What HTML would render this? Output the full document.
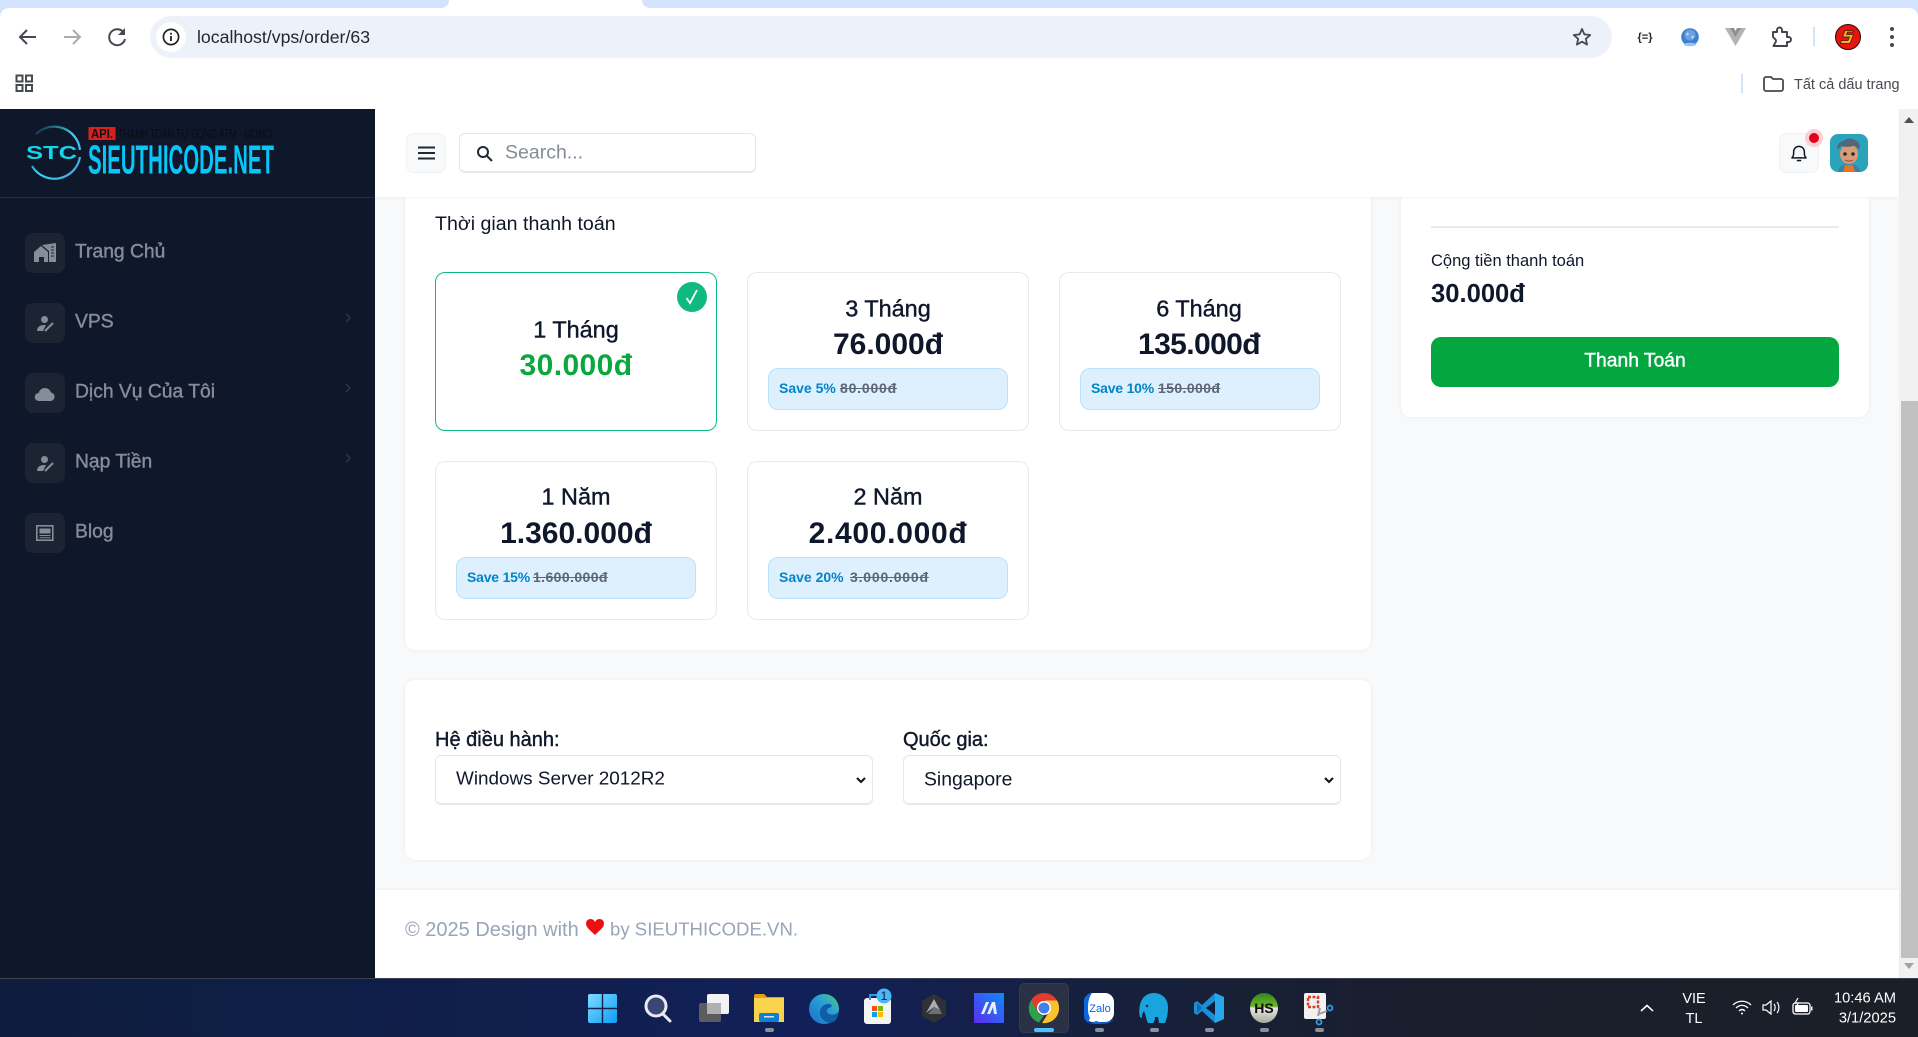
<!DOCTYPE html>
<html lang="vi"><head><meta charset="utf-8"><title>VPS Order</title>
<style>
*{box-sizing:border-box}
html,body{margin:0;padding:0}
body{width:1918px;height:1037px;overflow:hidden;background:#fff;position:relative;font-family:"Liberation Sans","Noto Sans CJK SC",sans-serif;color:#0f172a}
.a{position:absolute}
.t{position:absolute;white-space:nowrap;line-height:1;transform:translateY(-50%)}
.c{position:absolute;white-space:nowrap;line-height:1;transform:translate(-50%,-50%)}
.r{position:absolute;white-space:nowrap;line-height:1;transform:translateY(-50%);text-align:right}
svg{position:absolute;overflow:visible}
.card{position:absolute;background:#fff;border-radius:10px;box-shadow:0 0 3px rgba(15,23,42,.07)}
.plan{position:absolute;width:282px;height:159px;background:#fff;border:1px solid #e7e9ed;border-radius:10px}
.badge{position:absolute;width:240px;height:42px;background:#deF0fe;border:1px solid #bae2fb;border-radius:10px}
.name{font-size:23.4px;-webkit-text-stroke:.4px #0f172a}
.price{font-size:30px;font-weight:700}
.sv{font-size:14px;font-weight:700;color:#0284c7}
.old{font-size:14px;font-weight:700;color:#5b6575;text-decoration:line-through;letter-spacing:.8px}
.ic{position:absolute;left:25px;width:40px;height:40px;background:#1c2434;border-radius:8px}
.nav{font-size:19.3px;color:#868c99;left:75px;-webkit-text-stroke:.4px #868c99}
.sel{position:absolute;width:438px;height:50px;background:#fff;border:1px solid #e5e7eb;border-bottom:2px solid #e5e7eb;border-radius:6px}
.dot{position:absolute;top:1028px;width:9px;height:4px;background:#8b909b;border-radius:2px}
</style></head><body>

<!-- Browser chrome -->
<div class="a" style="left:0;top:0;width:449px;height:8px;background:#d3e3fd;border-radius:0 0 8px 0"></div>
<div class="a" style="left:642px;top:0;width:1276px;height:8px;background:#d3e3fd;border-radius:0 0 0 8px"></div>
<div class="a" style="left:0;top:8px;width:1918px;height:101px;background:#fff"></div>
<div class="a" style="left:0;top:8px;width:8px;height:8px;background:radial-gradient(circle at 100% 100%,#fff 7.5px,#d3e3fd 8px)"></div>
<div class="a" style="left:1910px;top:8px;width:8px;height:8px;background:radial-gradient(circle at 0 100%,#fff 7.5px,#d3e3fd 8px)"></div>
<svg style="left:0;top:0" width="200" height="60" viewBox="0 0 200 60" fill="none">
<path d="M36 37H20M27 30l-7 7 7 7" stroke="#454a50" stroke-width="2"/>
<path d="M64 37h16M73 30l7 7-7 7" stroke="#a9acb0" stroke-width="2"/>
<path d="M124 33a8 8 0 1 0 1 6" stroke="#454a50" stroke-width="2"/><path d="M125 28v7h-7z" fill="#454a50"/>
</svg>
<div class="a" style="left:150px;top:16px;width:1462px;height:42px;background:#edf2fa;border-radius:21px"></div>
<div class="a" style="left:156px;top:22px;width:30px;height:30px;background:#fff;border-radius:50%"></div>
<svg style="left:162px;top:28px" width="18" height="18" viewBox="0 0 18 18" fill="none"><circle cx="9" cy="9" r="7.6" stroke="#1f2226" stroke-width="1.7"/><rect x="8.1" y="8" width="1.8" height="5" fill="#1f2226"/><rect x="8.1" y="4.8" width="1.8" height="1.8" fill="#1f2226"/></svg>
<div class="t" style="left:197px;top:38px;font-size:17.7px;color:#24272b">localhost/vps/order/63</div>
<svg style="left:1572px;top:27px" width="20" height="20" viewBox="0 0 20 20" fill="none"><path d="M10 2l2.4 5.4 5.8.6-4.4 3.9 1.3 5.7L10 14.7l-5.1 2.9 1.3-5.7L1.800 8l5.800-.6z" stroke="#454a50" stroke-width="1.8" stroke-linejoin="round"/></svg>
<div class="c" style="left:1645px;top:38px;font-size:11px;font-weight:700;color:#22252a">{=}</div>
<svg style="left:1681px;top:27px" width="18" height="20" viewBox="0 0 18 20"><circle cx="9" cy="10" r="8.800" fill="#3f7fd0"/><circle cx="9" cy="8" r="5.500" fill="#6aa2e0"/><circle cx="6.500" cy="7" r="1.300" fill="#bcd8f5"/><circle cx="11.500" cy="10" r="1.300" fill="#bcd8f5"/><ellipse cx="9" cy="17.500" rx="6" ry="1.800" fill="#9ec3ec"/></svg>
<svg style="left:1725px;top:28px" width="21" height="18" viewBox="0 0 21 18"><path d="M0 0h7l3.500 6L14 0h7L10.500 18z" fill="#b3b3b3"/><path d="M5 0h4l1.500 3L12 0h4l-5.500 9z" fill="#8f8f8f"/></svg>
<svg style="left:1771px;top:26px" width="21" height="22" viewBox="0 0 21 22" fill="none"><path d="M2 6h4V4a2.500 2.500 0 0 1 5 0v2h5v5h1.500a2.500 2.500 0 0 1 0 5H16v4H2.500l1.500-3a2.500 2.500 0 0 0 0-4l-2-2z" stroke="#3f4347" stroke-width="1.900" stroke-linejoin="round"/></svg>
<div class="a" style="left:1813px;top:27px;width:2px;height:19px;background:#d3e3fd"></div>
<svg style="left:1835px;top:24px" width="26" height="26" viewBox="0 0 26 26"><circle cx="13" cy="13" r="12.500" fill="#e8140f" stroke="#2a0a08" stroke-width="1"/><path d="M18.500 6.500H10L7.500 13h7l-1.500 3.500H6.500l-1 3H15l3.500-9h-7l1-2.500h5.500z" fill="#f6b221" stroke="#3a1a05" stroke-width=".7"/></svg>
<svg style="left:1888px;top:26px" width="8" height="22" viewBox="0 0 8 22"><circle cx="4" cy="3" r="2" fill="#454a50"/><circle cx="4" cy="11" r="2" fill="#454a50"/><circle cx="4" cy="19" r="2" fill="#454a50"/></svg>

<svg style="left:15px;top:74px" width="19" height="19" viewBox="0 0 19 19" fill="none" stroke="#454a50" stroke-width="2"><rect x="1.500" y="1.500" width="6" height="6"/><rect x="11" y="1.500" width="6" height="6"/><rect x="1.500" y="11" width="6" height="6"/><rect x="11" y="11" width="6" height="6"/></svg>
<div class="a" style="left:1741px;top:74px;width:2px;height:19px;background:#d3e3fd"></div>
<svg style="left:1763px;top:76px" width="21" height="16" viewBox="0 0 21 16" fill="none"><path d="M1 3a2 2 0 0 1 2-2h5l2 2h8a2 2 0 0 1 2 2v8a2 2 0 0 1-2 2H3a2 2 0 0 1-2-2z" stroke="#454a50" stroke-width="1.800"/></svg>
<div class="t" style="left:1794px;top:85px;font-size:14.500px;color:#454a50">Tất cả dấu trang</div>

<!-- Main background -->
<div class="a" style="left:375px;top:109px;width:1524px;height:869px;background:#f8f9fb"></div>

<!-- Scrollbar -->
<div class="a" style="left:1899px;top:109px;width:19px;height:869px;background:#f1f1f1"></div>
<div class="a" style="left:1901px;top:401px;width:17px;height:557px;background:#c1c1c1"></div>
<svg style="left:1904px;top:117px" width="10" height="6"><path d="M0 6L5 0l5 6z" fill="#505050"/></svg>
<svg style="left:1904px;top:963px" width="10" height="6"><path d="M0 0l5 6 5-6z" fill="#a3a3a3"/></svg>

<!-- Sidebar -->
<div class="a" style="left:0;top:109px;width:375px;height:869px;background:#0f172a"></div>
<div class="a" style="left:0;top:197px;width:375px;height:1px;background:#262f40"></div>
<svg style="left:26px;top:124px" width="252" height="58" viewBox="0 0 252 58">
<defs><linearGradient id="rg" x1="0" y1="0" x2="1" y2="1"><stop offset="0" stop-color="#0f172a"/><stop offset=".5" stop-color="#35d8f0"/><stop offset="1" stop-color="#4a9fe0"/></linearGradient></defs>
<path d="M10 10A26 26 0 0 1 54 26M54 33A26 26 0 0 1 6 42" fill="none" stroke="url(#rg)" stroke-width="2.200"/>
<text x="0" y="35" font-family="Liberation Sans" font-weight="700" font-size="18" fill="#10d6ee" textLength="51" lengthAdjust="spacingAndGlyphs">STC</text>
<rect x="62.500" y="3" width="27" height="13" fill="#d8201e"/>
<text x="65" y="14" font-family="Liberation Sans" font-weight="700" font-size="12.500" fill="#111" textLength="22" lengthAdjust="spacingAndGlyphs">API.</text>
<text x="92" y="14" font-family="Liberation Sans" font-size="13" fill="#0a0c12" textLength="154" lengthAdjust="spacingAndGlyphs">THANH TOÁN TỰ ĐỘNG ATM - MOMO</text>
<text x="62" y="49.500" font-family="Liberation Sans" font-weight="700" font-size="41" fill="#06c6fa" textLength="186" lengthAdjust="spacingAndGlyphs">SIEUTHICODE.NET</text>
</svg>

<div class="ic" style="top:233px"></div>
<svg style="left:34px;top:243px" width="22" height="20" viewBox="0 0 22 20"><path d="M0 9l7-6 7 6v10h-4v-5H5v5H0z" fill="#868c99"/><path d="M8 2l14-2v19h-7V8L9 3z" fill="#868c99"/><path d="M17 4h3M17 7h3M17 10h3M17 13h3" stroke="#1c2434" stroke-width="1"/></svg>
<div class="t nav" style="top:252px">Trang Chủ</div>

<div class="ic" style="top:303px"></div>
<svg style="left:37px;top:316px" width="17" height="15" viewBox="0 0 17 15"><circle cx="7.500" cy="3.500" r="3.500" fill="#868c99"/><path d="M0 15c0-4 3-6 7-6h2l-3 6z" fill="#868c99"/><path d="M8 15l8-8" stroke="#868c99" stroke-width="2"/></svg>
<div class="t nav" style="top:322px">VPS</div>
<svg style="left:345px;top:313px" width="7" height="10" viewBox="0 0 7 10" fill="none"><path d="M1 1l4 4-4 4" stroke="#2d3547" stroke-width="1.500"/></svg>

<div class="ic" style="top:373px"></div>
<svg style="left:35px;top:386px" width="20" height="15" viewBox="0 0 20 15"><path d="M4 15a4 4 0 0 1-.5-8A6.500 6.500 0 0 1 16 6.500 4.300 4.300 0 0 1 16 15z" fill="#868c99"/></svg>
<div class="t nav" style="top:392px">Dịch Vụ Của Tôi</div>
<svg style="left:345px;top:383px" width="7" height="10" viewBox="0 0 7 10" fill="none"><path d="M1 1l4 4-4 4" stroke="#2d3547" stroke-width="1.500"/></svg>

<div class="ic" style="top:443px"></div>
<svg style="left:37px;top:456px" width="17" height="15" viewBox="0 0 17 15"><circle cx="7.500" cy="3.500" r="3.500" fill="#868c99"/><path d="M0 15c0-4 3-6 7-6h2l-3 6z" fill="#868c99"/><path d="M8 15l8-8" stroke="#868c99" stroke-width="2"/></svg>
<div class="t nav" style="top:462px">Nạp Tiền</div>
<svg style="left:345px;top:453px" width="7" height="10" viewBox="0 0 7 10" fill="none"><path d="M1 1l4 4-4 4" stroke="#2d3547" stroke-width="1.500"/></svg>

<div class="ic" style="top:513px"></div>
<svg style="left:36px;top:525px" width="18" height="16" viewBox="0 0 18 16"><rect x=".8" y=".8" width="16" height="14.400" fill="none" stroke="#868c99" stroke-width="1.600"/><rect x="3.500" y="3.500" width="11" height="5" fill="#868c99"/><path d="M3.500 10.500h11M3.500 12.800h11" stroke="#868c99" stroke-width="1"/></svg>
<div class="t nav" style="top:532px">Blog</div>

<!-- Right summary card -->
<div class="card" style="left:1401px;top:170px;width:468px;height:247px"></div>
<div class="a" style="left:1431px;top:226px;width:408px;height:2px;background:#e9eaec"></div>
<div class="t" style="left:1431px;top:261px;font-size:16.500px">Cộng tiền thanh toán</div>
<div class="t" style="left:1431px;top:295px;font-size:25.600px;font-weight:700">30.000đ</div>
<div class="a" style="left:1431px;top:337px;width:408px;height:50px;background:#03a63f;border-radius:10px"></div>
<div class="c" style="left:1635px;top:361px;font-size:19.300px;color:#fff;-webkit-text-stroke:.4px #fff">Thanh Toán</div>

<!-- Plans card -->
<div class="card" style="left:405px;top:170px;width:966px;height:480px"></div>
<div class="t" style="left:435px;top:225px;font-size:19.600px">Thời gian thanh toán</div>

<div class="plan" style="left:435px;top:272px;border-color:#10b981"></div>
<div class="a" style="left:677px;top:282px;width:30px;height:30px;border-radius:50%;background:#10b981"></div>
<svg style="left:684px;top:288px" width="16" height="18" viewBox="0 0 16 18" fill="none"><path d="M2.500 10l3.500 5L13 2" stroke="#fff" stroke-width="1.800"/></svg>
<div class="c name" style="left:576px;top:330px">1 Tháng</div>
<div class="c price" style="left:576px;top:366px;color:#09a83f;letter-spacing:.4px">30.000đ</div>

<div class="plan" style="left:747px;top:272px"></div>
<div class="c name" style="left:888px;top:309px">3 Tháng</div>
<div class="c price" style="left:888px;top:345px">76.000đ</div>
<div class="badge" style="left:768px;top:368px"></div>
<div class="t sv" style="left:779px;top:388px">Save 5%</div>
<div class="t old" style="left:840px;top:388px">80.000đ</div>

<div class="plan" style="left:1059px;top:272px"></div>
<div class="c name" style="left:1199px;top:309px">6 Tháng</div>
<div class="c price" style="left:1199px;top:345px;letter-spacing:-.6px">135.000đ</div>
<div class="badge" style="left:1080px;top:368px"></div>
<div class="t sv" style="left:1091px;top:388px;letter-spacing:-.2px">Save 10%</div>
<div class="t old" style="left:1158px;top:388px;letter-spacing:.4px">150.000đ</div>

<div class="plan" style="left:435px;top:461px"></div>
<div class="c name" style="left:576px;top:497px">1 Năm</div>
<div class="c price" style="left:576px;top:534px">1.360.000đ</div>
<div class="badge" style="left:456px;top:557px"></div>
<div class="t sv" style="left:467px;top:577px;letter-spacing:-.2px">Save 15%</div>
<div class="t old" style="left:533px;top:577px;letter-spacing:.4px">1.600.000đ</div>

<div class="plan" style="left:747px;top:461px"></div>
<div class="c name" style="left:888px;top:497px">2 Năm</div>
<div class="c price" style="left:888px;top:534px;letter-spacing:.7px">2.400.000đ</div>
<div class="badge" style="left:768px;top:557px"></div>
<div class="t sv" style="left:779px;top:577px">Save 20%</div>
<div class="t old" style="left:850px;top:577px">3.000.000đ</div>

<!-- Options card -->
<div class="card" style="left:405px;top:680px;width:966px;height:180px"></div>
<div class="t" style="left:435px;top:740px;font-size:20px;-webkit-text-stroke:.4px #0f172a">Hệ điều hành:</div>
<div class="t" style="left:903px;top:740px;font-size:20px;-webkit-text-stroke:.4px #0f172a">Quốc gia:</div>
<div class="sel" style="left:435px;top:755px"></div>
<div class="sel" style="left:903px;top:755px"></div>
<div class="t" style="left:456px;top:780px;font-size:18.900px">Windows Server 2012R2</div>
<div class="t" style="left:924px;top:780px;font-size:19.400px">Singapore</div>
<svg style="left:856px;top:777px" width="10" height="7" fill="none"><path d="M1 1l4 4 4-4" stroke="#111" stroke-width="2"/></svg>
<svg style="left:1324px;top:777px" width="10" height="7" fill="none"><path d="M1 1l4 4 4-4" stroke="#111" stroke-width="2"/></svg>

<!-- Header -->
<div class="a" style="left:375px;top:109px;width:1524px;height:88px;background:#fff;box-shadow:0 1px 3px rgba(15,23,42,.05)"></div>
<div class="a" style="left:406px;top:133px;width:40px;height:40px;background:#f8f9fb;border:1px solid #f0f1f4;border-radius:8px"></div>
<svg style="left:418px;top:146px" width="17" height="14"><path d="M0 1.500h17M0 7h17M0 12.500h17" stroke="#1f2937" stroke-width="2"/></svg>
<div class="a" style="left:459px;top:133px;width:297px;height:40px;background:#fff;border:1px solid #e5e7eb;border-bottom-width:2px;border-radius:6px"></div>
<svg style="left:476px;top:145px" width="17" height="17" fill="none"><circle cx="7" cy="7" r="5" stroke="#1f2937" stroke-width="2"/><path d="M10.500 10.500L16 16" stroke="#1f2937" stroke-width="2"/></svg>
<div class="t" style="left:505px;top:153px;font-size:19.500px;color:#848b98">Search...</div>
<div class="a" style="left:1779px;top:133px;width:40px;height:40px;background:#f8f9fb;border:1px solid #f0f1f4;border-radius:8px"></div>
<svg style="left:1791px;top:144px" width="16" height="18" viewBox="0 0 18 20" fill="none"><path d="M1 15.500c2-2 2-4 2-7a6 6 0 0 1 12 0c0 3 0 5 2 7z" stroke="#0f172a" stroke-width="1.700" stroke-linejoin="round"/><path d="M6.500 18.500h5" stroke="#0f172a" stroke-width="1.700"/></svg>
<div class="a" style="left:1805px;top:129px;width:18px;height:18px;border-radius:50%;background:#fbd0d4"></div>
<div class="a" style="left:1809px;top:133px;width:10px;height:10px;border-radius:50%;background:#e5001a"></div>
<svg style="left:1830px;top:134px" width="38" height="38" viewBox="0 0 38 38"><defs><clipPath id="av"><rect width="38" height="38" rx="8"/></clipPath></defs><g clip-path="url(#av)"><rect width="38" height="38" fill="#2ba3b8"/><path d="M8 38c1-6 5-8 11-8s10 2 11 8z" fill="#3d7fa6"/><path d="M13 38l2-7h8l2 7z" fill="#e8742a"/><ellipse cx="19" cy="20" rx="9" ry="10" fill="#d99a78"/><path d="M8 16c-2-6 3-9 6-9 2-3 8-3 10-1 4 0 7 4 5 10-2-3-4-4-6-4-4 1-9 1-11 0-2 0-3 2-4 4z" fill="#55657a"/><circle cx="15" cy="20" r="1.800" fill="#2a2a2a"/><circle cx="23" cy="20" r="1.800" fill="#2a2a2a"/><path d="M15 26c2 1.500 6 1.500 8 0" stroke="#8a4a35" stroke-width="1" fill="none"/></g></svg>

<!-- Footer -->
<div class="a" style="left:375px;top:890px;width:1524px;height:88px;background:#fff;box-shadow:0 -1px 2px rgba(15,23,42,.04)"></div>
<div class="t" style="left:405px;top:930px;font-size:20px;color:#98a4b8">© 2025 Design with</div>
<svg style="left:586px;top:919px" width="18" height="16" viewBox="0 0 18 16"><path d="M9 16C4 11 0 8.500 0 4.500 0 1.500 2.500 0 4.500 0 6.500 0 8 1 9 3c1-2 2.500-3 4.500-3C15.500 0 18 1.500 18 4.500c0 4-4 6.500-9 11.500z" fill="#ec0f0f"/></svg>
<div class="t" style="left:610px;top:930px;font-size:18.600px;color:#98a4b8">by SIEUTHICODE.VN.</div>

<!-- Taskbar -->
<div class="a" style="left:0;top:978px;width:1918px;height:59px;background:linear-gradient(90deg,#0e1d3d 0,#101f4e 30%,#12205a 42%,#15203f 56%,#1a1f2f 72%,#1b1f27 100%)"></div>
<div class="a" style="left:0;top:978px;width:1918px;height:1px;background:#3a4050"></div>
<div class="a" style="left:1019px;top:983px;width:50px;height:50px;background:#2a3145;border:1px solid #343b4f;border-radius:5px"></div>

<svg style="left:588px;top:994px" width="29" height="29" viewBox="0 0 29 29"><defs><linearGradient id="w" x1="0" y1="0" x2="1" y2="1"><stop offset="0" stop-color="#7fdcff"/><stop offset="1" stop-color="#0e9cf5"/></linearGradient></defs><path d="M0 2a2 2 0 0 1 2-2h11.800v13.800H0zM15.200 0H27a2 2 0 0 1 2 2v11.800H15.200zM0 15.200h13.800V29H2a2 2 0 0 1-2-2zM15.200 15.200H29V27a2 2 0 0 1-2 2H15.200z" fill="url(#w)"/></svg>
<svg style="left:644px;top:994px" width="28" height="29" viewBox="0 0 28 29" fill="none"><circle cx="12" cy="12" r="10" fill="#3a4676" stroke="#e8eaf0" stroke-width="3"/><path d="M19 20l7 7" stroke="#e8eaf0" stroke-width="3" stroke-linecap="round"/></svg>
<svg style="left:699px;top:994px" width="30" height="28" viewBox="0 0 30 28"><rect y="9" width="22" height="19" rx="2" fill="#5c5c5f"/><rect x="8" y="0" width="22" height="20" rx="2" fill="#f2f2f2"/><rect x="8" y="9" width="14" height="11" fill="#b0b0b2"/></svg>
<svg style="left:754px;top:994px" width="30" height="28" viewBox="0 0 30 28"><path d="M0 2a2 2 0 0 1 2-2h8l3 3h17v6H0z" fill="#e2a00f"/><path d="M0 4h30v24H0z" fill="#fbd24c"/><rect x="5" y="19" width="20" height="9" rx="2" fill="#0f7fd0"/><rect x="10" y="22" width="10" height="1.500" fill="#cfe9fb"/></svg>
<svg style="left:809px;top:994px" width="30" height="30" viewBox="0 0 30 30"><defs><linearGradient id="e1" x1="0" y1="1" x2="1" y2="0"><stop offset="0" stop-color="#1b6fc4"/><stop offset=".6" stop-color="#2aa0d8"/><stop offset="1" stop-color="#4fd06a"/></linearGradient></defs><circle cx="15" cy="15" r="15" fill="url(#e1)"/><path d="M30 17c-2 4-8 4-10 3-3-1-3-5 0-6 3-1 4-3 1-4-6-1-11 4-10 10 1 6 7 10 13 8 3-1 5-4 6-11z" fill="#0f5ea8"/></svg>
<svg style="left:864px;top:989px" width="32" height="35" viewBox="0 0 32 35"><rect x="0" y="9" width="27" height="26" rx="3" fill="#f4f4f4"/><path d="M6 11V6h14v5" fill="none" stroke="#2a9fe0" stroke-width="2"/><rect x="8" y="17" width="5" height="5" fill="#f25022"/><rect x="14" y="17" width="5" height="5" fill="#7fba00"/><rect x="8" y="23" width="5" height="5" fill="#00a4ef"/><rect x="14" y="23" width="5" height="5" fill="#ffb900"/><circle cx="20" cy="7" r="7.500" fill="#45b8f5"/><text x="20" y="11" text-anchor="middle" font-family="Liberation Sans" font-size="12" fill="#0d1a3a">1</text></svg>
<svg style="left:921px;top:994px" width="26" height="29" viewBox="0 0 26 29"><path d="M13 0l12 7v15l-12 7-12-7V7z" fill="#2f3136"/><path d="M13 5l6 11-6-3-8 6z" fill="#a9abb0"/><path d="M13 13l6 3 2 4H7z" fill="#6b6e74"/></svg>
<svg style="left:974px;top:993px" width="30" height="30" viewBox="0 0 30 30"><defs><linearGradient id="m1" x1="0" y1="1" x2="1" y2="0"><stop offset="0" stop-color="#5b2df0"/><stop offset="1" stop-color="#0f8bf5"/></linearGradient></defs><rect width="30" height="30" fill="url(#m1)"/><path d="M7 21l5-12h3L10 21zM13 21l5-12h3l2 12h-3l-1-7-3 7z" fill="#e8f0ff"/></svg>
<svg style="left:1029px;top:993px" width="30" height="30" viewBox="0 0 30 30"><path d="M15 0a15 15 0 0 1 13 7.500H15z" fill="#e33b2e"/><path d="M2 7.500A15 15 0 0 1 15 0v7.500l-3 7.500-6.500 11.600A15 15 0 0 1 2 7.500z" fill="#e33b2e"/><path d="M2 7.500l6.500 11.300A7.500 7.500 0 0 0 15 22.500l-5 7.100A15 15 0 0 1 2 7.500z" fill="#2ba24c"/><path d="M28 7.500A15 15 0 0 1 13 30l7.500-11.600A7.500 7.500 0 0 0 15 7.500z" fill="#fbc02d"/><circle cx="15" cy="15" r="7" fill="#fff"/><circle cx="15" cy="15" r="5.500" fill="#3f7fe8"/></svg>
<svg style="left:1084px;top:993px" width="30" height="31" viewBox="0 0 30 31"><rect width="30" height="29" rx="9" fill="#fff"/><path d="M0 9c0-5 4-9 8-9C3 6 3 20 6 25l-2 5c4 0 6-1 8-2 5 2 12 2 18-2-2 3-6 5-15 5-5 0-15 0-15-8z" fill="#0b66e4"/><text x="16" y="19" text-anchor="middle" font-family="Liberation Sans" font-size="11" fill="#0b66e4">Zalo</text></svg>
<svg style="left:1139px;top:993px" width="30" height="31" viewBox="0 0 30 31"><path d="M15 0c9 0 14 7 14 14 0 7-1 11-3 16h-6l-1-6h-3c0 3-1 5-2 6H9c-2-3-2-8-4-12-2 3-2 5-2 7l-2-1c-2-6-1-24 14-24z" fill="#19a4de"/><circle cx="8" cy="13" r="1.200" fill="#0b2b45"/></svg>
<svg style="left:1194px;top:993px" width="30" height="30" viewBox="0 0 30 30"><path d="M21 0l9 4v22l-9 4-13-12-5 4-3-2V10l3-2 5 4z" fill="#1a8fd8"/><path d="M21 0l9 4v22l-9 4z" fill="#2ba6ec"/><path d="M21 8l-9 7 9 7z" fill="#0f1c3a"/><path d="M3 10l5 5-5 5z" fill="#0f1c3a" opacity=".35"/></svg>
<svg style="left:1250px;top:993px" width="28" height="30" viewBox="0 0 28 30"><defs><linearGradient id="h1" x1="0" y1="0" x2="0" y2="1"><stop offset="0" stop-color="#2e8a1a"/><stop offset=".45" stop-color="#71b52a"/><stop offset=".5" stop-color="#e6e6e0"/><stop offset="1" stop-color="#a9a9a2"/></linearGradient></defs><ellipse cx="14" cy="15" rx="14" ry="15" fill="url(#h1)"/><text x="14" y="20" text-anchor="middle" font-family="Liberation Sans" font-weight="700" font-size="14" fill="#0d0d0d">HS</text></svg>
<svg style="left:1304px;top:993px" width="30" height="34" viewBox="0 0 30 34"><rect width="22" height="26" rx="2" fill="#f1f1f1"/><rect x="4" y="4" width="10" height="10" fill="none" stroke="#d9402b" stroke-width="2.500" stroke-dasharray="3 1.500"/><path d="M16 15l-2 8M15 21l8-3" stroke="#9b9ea4" stroke-width="2"/><circle cx="26" cy="15" r="2.500" fill="none" stroke="#2d9fe0" stroke-width="1.800"/><circle cx="15" cy="29" r="2.500" fill="none" stroke="#2d9fe0" stroke-width="1.800"/></svg>

<div class="dot" style="left:765px"></div>
<div class="a" style="left:1034px;top:1028px;width:20px;height:4px;background:#4cc2ff;border-radius:2px"></div>
<div class="dot" style="left:1095px"></div>
<div class="dot" style="left:1150px"></div>
<div class="dot" style="left:1205px"></div>
<div class="dot" style="left:1260px"></div>
<div class="dot" style="left:1315px"></div>

<svg style="left:1640px;top:1004px" width="14" height="8" fill="none"><path d="M1 7l6-5.500L13 7" stroke="#fff" stroke-width="1.600"/></svg>
<div class="c" style="left:1694px;top:999px;font-size:14.500px;color:#fff">VIE</div>
<div class="c" style="left:1694px;top:1019px;font-size:14.500px;color:#fff">TL</div>
<svg style="left:1732px;top:1000px" width="20" height="15" viewBox="0 0 20 15" fill="none" stroke="#fff" stroke-width="1.300"><path d="M1 5c5-5 13-5 18 0M4 8c3.500-3.500 8.500-3.500 12 0M7 11c2-2 4-2 6 0"/><circle cx="10" cy="13.500" r="1" fill="#fff" stroke="none"/></svg>
<svg style="left:1762px;top:999px" width="20" height="17" viewBox="0 0 20 17" fill="none" stroke="#fff" stroke-width="1.200"><path d="M1 6h3l5-4v13l-5-4H1z"/><path d="M12 5c1.500 2 1.500 5 0 7M15 3c2.500 3 2.500 8 0 11"/></svg>
<svg style="left:1792px;top:998px" width="21" height="17" viewBox="0 0 21 17" fill="none"><rect x="1" y="5" width="17" height="11" rx="2.500" stroke="#fff" stroke-width="1.300"/><rect x="3" y="7" width="13" height="7" rx="1" fill="#fff"/><rect x="19" y="8.500" width="1.500" height="4" fill="#fff"/><path d="M6 0L3 5h3l-1 3" stroke="#fff" stroke-width="1.200"/></svg>
<div class="r" style="right:22px;top:999px;font-size:14.700px;color:#fff">10:46 AM</div>
<div class="r" style="right:22px;top:1019px;font-size:14.700px;color:#fff">3/1/2025</div>

</body></html>
